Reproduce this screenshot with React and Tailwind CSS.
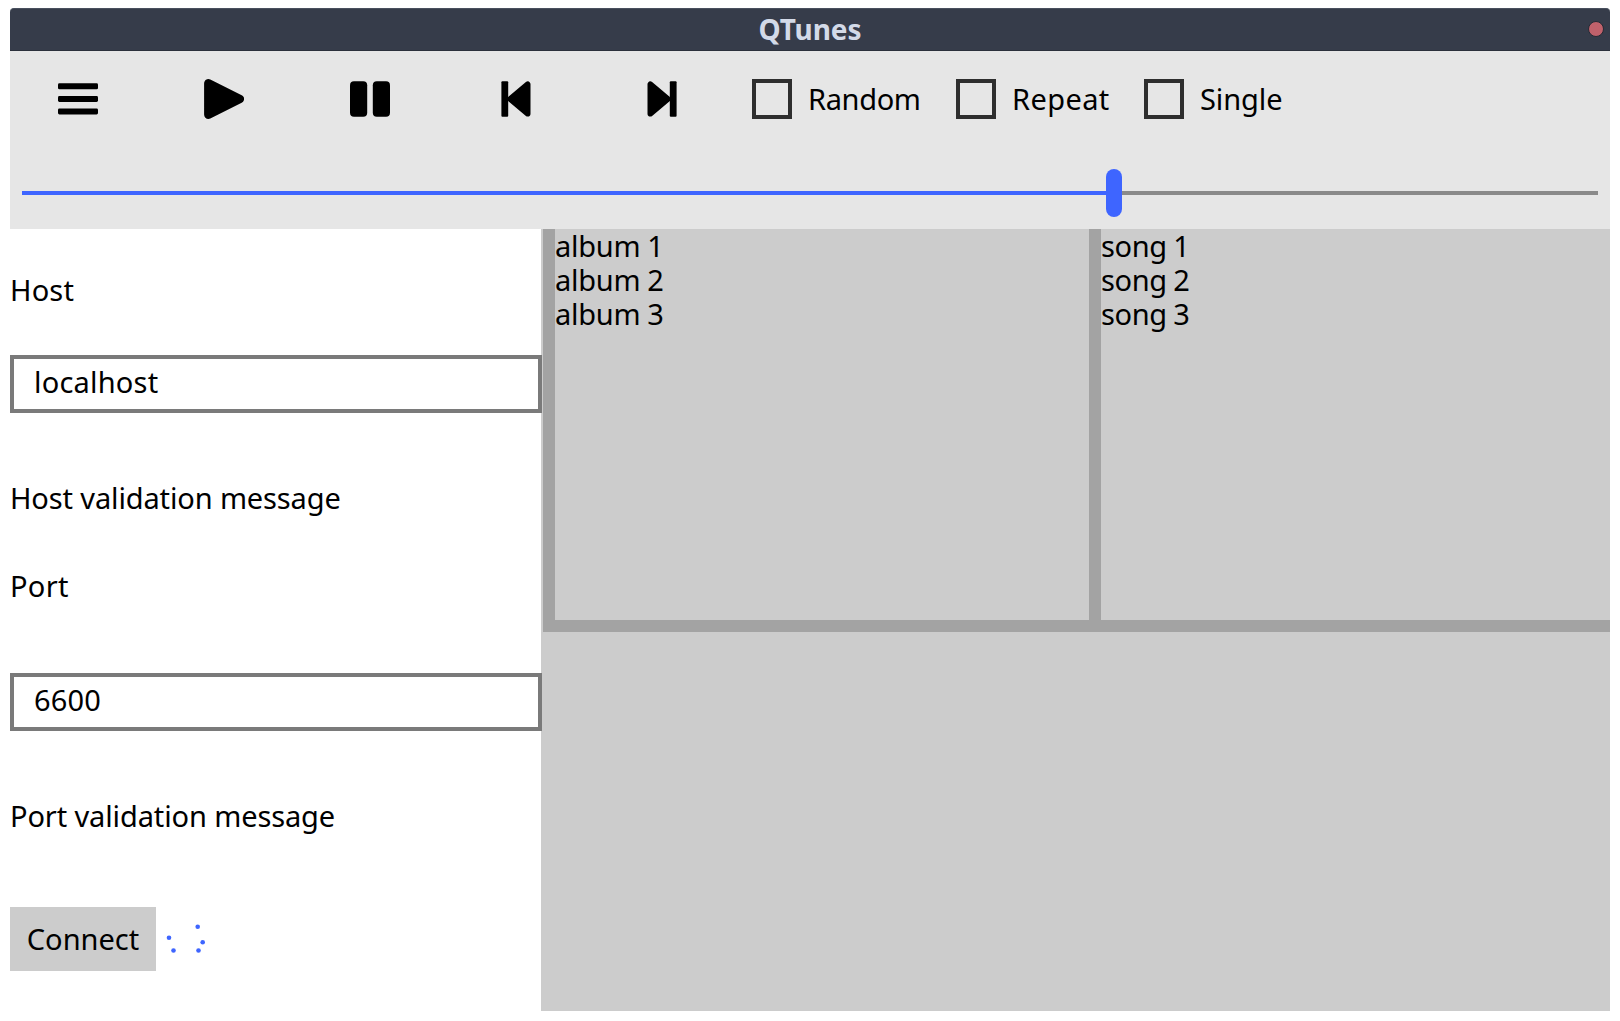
function IconCell({ label, children }) {
  return (
    <button type="button" aria-label={label} className="flex h-24 w-[136px] items-center justify-center">
      <svg width="40" height="40" viewBox="0 0 40 40" fill="black" stroke="black" strokeLinejoin="round">
        {children}
      </svg>
    </button>
  );
}

function MenuIcon() {
  return (
    <g stroke="none">
      <rect x="0" y="4.3" width="40" height="6" rx="1.4" />
      <rect x="0" y="17" width="40" height="6" rx="1.4" />
      <rect x="0" y="29.5" width="40" height="6" rx="1.4" />
    </g>
  );
}

function PlayIcon() {
  return <path d="M4.4 4.4V35.6L35.8 20Z" strokeWidth="8.6" />;
}

function PauseIcon() {
  return (
    <g stroke="none">
      <rect x="0" y="2.3" width="17.2" height="35.4" rx="4" />
      <rect x="22.8" y="2.3" width="17.2" height="35.4" rx="4" />
    </g>
  );
}

function PreviousIcon() {
  return (
    <g>
      <rect x="5.4" y="2.3" width="6.8" height="35.4" rx="1" stroke="none" />
      <path d="M31.7 5.2V34.8L14.2 20Z" strokeWidth="5.6" />
    </g>
  );
}

function NextIcon() {
  return (
    <g transform="translate(40 0) scale(-1 1)">
      <PreviousIcon />
    </g>
  );
}

function Check({ label, className, textClass = "" }) {
  return (
    <label className={`flex items-center gap-4 ${className}`}>
      <span className="size-10 shrink-0 border-4 border-[#2e2e2e]" />
      <span className={`whitespace-nowrap leading-10 ${textClass}`}>{label}</span>
    </label>
  );
}

function Field({ value }) {
  return (
    <div className="relative h-[58px] w-[532px] border-4 border-[#7a7a7a] bg-white pl-5 leading-[46px] tracking-[0.2px]">
      {value}
    </div>
  );
}

export default function App() {
  return (
    <div className="h-[1021px] w-[1620px] overflow-hidden bg-white px-[10px] pt-2 font-['Noto_Sans',sans-serif] text-[29px] text-black">
      <div className="flex h-[1003px] w-[1600px] flex-col">
        <header className="grid h-[43px] shrink-0 grid-cols-[1fr_auto_1fr] items-center rounded-t-[4px] border-t border-b border-t-[#49505e] border-b-[#2b303b] bg-[#363c4a]">
          <span />
          <h1 className="text-[28px] leading-[41px] font-bold text-[#d3dae8]">QTunes</h1>
          <span className="mr-[6px] mb-[2px] size-4 justify-self-end rounded-full border-[1.5px] border-[#252a35] bg-[#c0616b]" />
        </header>

        <section className="flex h-[178px] shrink-0 flex-col bg-[#e6e6e6]">
          <div className="flex h-24 items-center">
            <div className="flex gap-[10px]">
              <IconCell label="Menu"><MenuIcon /></IconCell>
              <IconCell label="Play"><PlayIcon /></IconCell>
              <IconCell label="Pause"><PauseIcon /></IconCell>
              <IconCell label="Previous"><PreviousIcon /></IconCell>
              <IconCell label="Next"><NextIcon /></IconCell>
            </div>
            <div className="ml-[22px] flex">
              <Check label="Random" className="w-[204px]" textClass="-tracking-[0.35px]" />
              <Check label="Repeat" className="w-[188px]" textClass="tracking-[0.4px]" />
              <Check label="Single" className="w-[150px]" textClass="-tracking-[0.1px]" />
            </div>
          </div>
          <div className="mx-3 mt-[22px] flex h-12 items-center">
            <div className="h-1 w-[1084px] bg-[#3e65ff]" />
            <div className="h-12 w-4 rounded-full bg-[#3e65ff]" />
            <div className="h-1 flex-1 bg-[#8a8a8a]" />
          </div>
        </section>

        <main className="flex min-h-0 flex-1">
          <aside className="flex w-[531px] shrink-0 flex-col bg-white">
            <p className="mt-[44px] leading-[34px] tracking-[0.15px]">Host</p>
            <div className="mt-12"><Field value="localhost" /></div>
            <p className="mt-[68px] leading-[34px] -tracking-[0.13px]">Host validation message</p>
            <p className="mt-[54px] leading-[34px] tracking-[0.3px]">Port</p>
            <div className="mt-[70px]"><Field value="6600" /></div>
            <p className="mt-[68px] leading-[34px] -tracking-[0.12px]">Port validation message</p>
            <div className="mt-[74px] flex">
              <button type="button" className="h-16 w-[146px] bg-[#cccccc] leading-[64px]">Connect</button>
              <svg className="ml-2.5" width="40" height="64" viewBox="166 907 40 64" fill="#3e65ff">
                <circle cx="197.7" cy="926.7" r="2.3" />
                <circle cx="169" cy="937.7" r="2.3" />
                <circle cx="202.7" cy="942.3" r="2.3" />
                <circle cx="173.5" cy="950.5" r="2.3" />
                <circle cx="198.5" cy="950.5" r="2.3" />
              </svg>
            </div>
          </aside>

          <div className="flex flex-1 flex-col bg-[#cccccc] pl-0.5">
            <div className="flex h-[403px] border-b-[12px] border-[#a3a3a3] leading-[34px]">
              <ul className="w-[546px] border-l-[12px] border-[#a3a3a3] -tracking-[0.25px] [word-spacing:-0.5px]">
                <li>album 1</li>
                <li>album 2</li>
                <li>album 3</li>
              </ul>
              <ul className="flex-1 border-l-[12px] border-[#a3a3a3] -tracking-[0.4px] [word-spacing:-0.5px]">
                <li>song 1</li>
                <li>song 2</li>
                <li>song 3</li>
              </ul>
            </div>
          </div>
        </main>
      </div>
    </div>
  );
}
